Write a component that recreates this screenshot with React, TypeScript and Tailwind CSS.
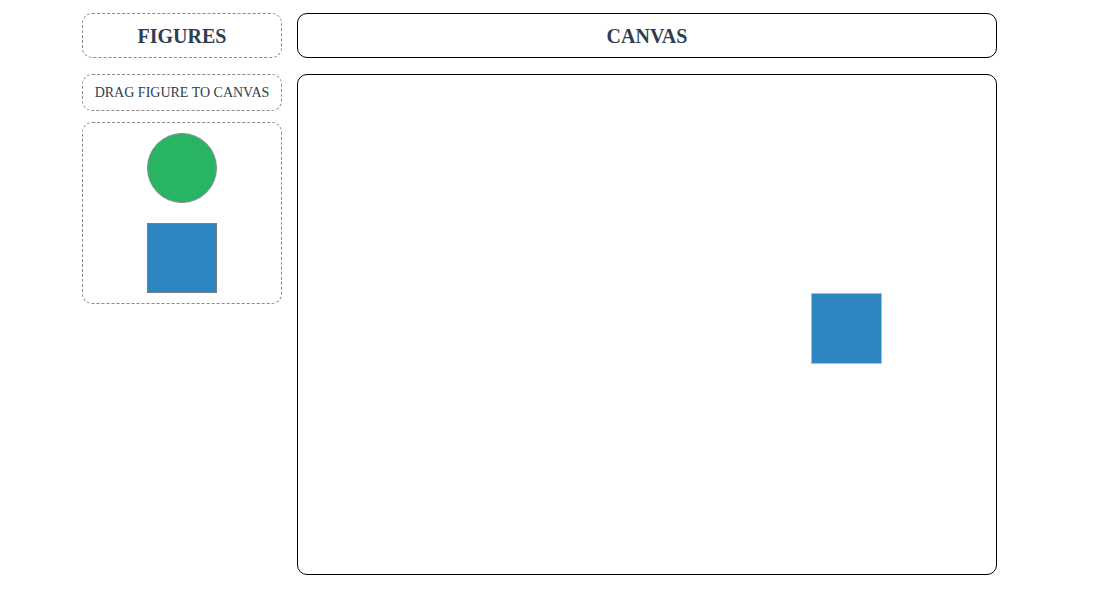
import React from 'react'

type Shape = { id: string; kind: 'circle' | 'square'; x: number; y: number }

const placed: Shape[] = [{ id: 's1', kind: 'square', x: 513, y: 218 }]

function Figure({ kind }: { kind: 'circle' | 'square' }) {
  if (kind === 'circle') {
    return <div className="h-[70px] w-[70px] rounded-full border border-[#7f8c8d] bg-[#28b463]" />
  }
  return <div className="h-[70px] w-[70px] border border-[#6f7f8c] bg-[#2e86c1]" />
}

export default function App() {
  return (
    <div
      className="flex gap-[15px] pl-[82px] pt-[13px] text-[#2c3e50]"
      style={{ fontFamily: '"Liberation Serif", "Times New Roman", serif' }}
    >
      {/* palette column */}
      <div className="flex w-[200px] flex-col">
        <div className="flex h-[45px] items-center justify-center rounded-[10px] border border-dashed border-[#8a8a8a] text-[20px] font-bold">
          FIGURES
        </div>
        <div className="mt-[16px] flex h-[37px] items-center justify-center rounded-[10px] border border-dashed border-[#8a8a8a] text-[14px]">
          DRAG FIGURE TO CANVAS
        </div>
        <div className="mt-[11px] flex flex-col items-center gap-[20px] rounded-[10px] border border-dashed border-[#8a8a8a] pt-[10px] pb-[10px]">
          <Figure kind="circle" />
          <Figure kind="square" />
        </div>
      </div>

      {/* canvas column */}
      <div className="flex w-[700px] flex-col">
        <div className="flex h-[45px] items-center justify-center rounded-[10px] border border-black text-[20px] font-bold">
          CANVAS
        </div>
        <div className="relative mt-[16px] h-[501px] rounded-[10px] border border-black">
          {placed.map((s) => (
            <div
              key={s.id}
              className="absolute h-[71px] w-[71px] border border-[#b0bcc6] bg-[#2e86c1]"
              style={{ left: s.x, top: s.y }}
            />
          ))}
        </div>
      </div>
    </div>
  )
}
